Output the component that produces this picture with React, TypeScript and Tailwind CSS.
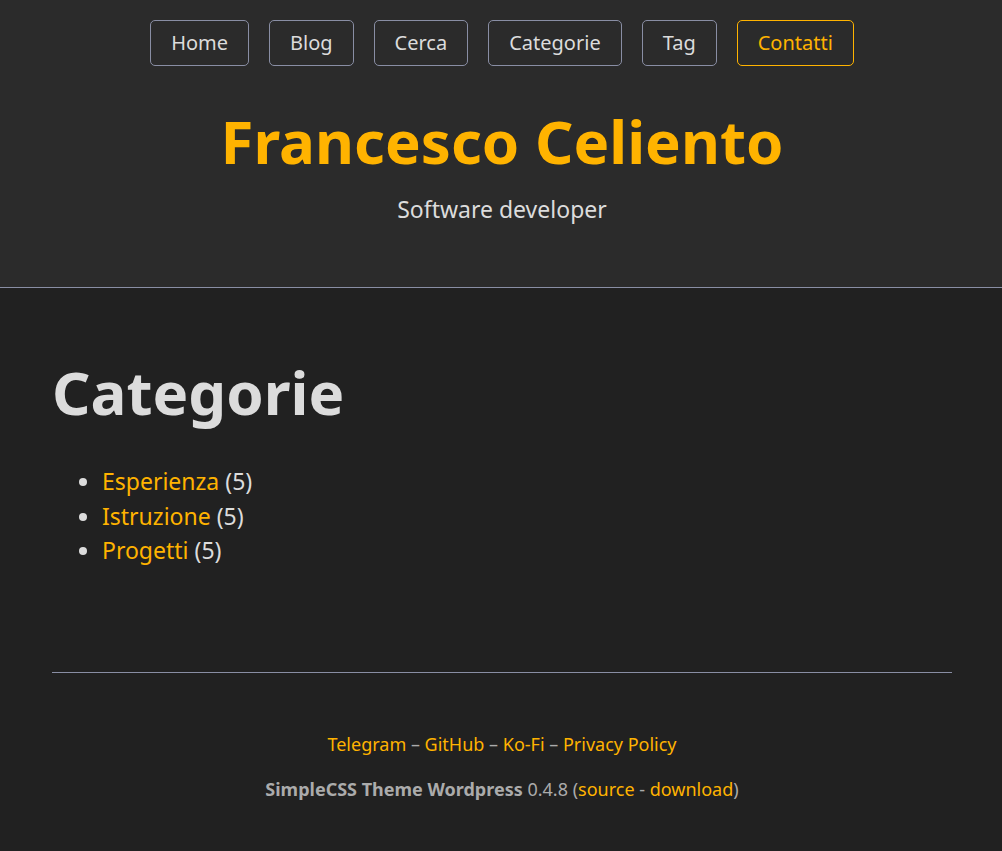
import React from "react";

const navItems = ["Home", "Blog", "Cerca", "Categorie", "Tag"];

export default function App() {
  return (
    <div className="min-h-[851px] bg-[#212121] text-[#dcdcdc]" style={{ fontFamily: '"Noto Sans", sans-serif' }}>
      <header className="bg-[#2b2b2b] border-b border-[#898ea4] pt-[20px] pb-[60px] pl-[2px] h-[288px] flex flex-col items-center">
        <nav className="flex justify-center gap-[20px]">
          {navItems.map((n) => (
            <a key={n} href="#" className="h-[46px] px-[20px] flex items-center border border-[#898ea4] rounded-[5px] text-[20px] text-[#dcdcdc]">
              {n}
            </a>
          ))}
          <a href="#" className="h-[46px] px-[20px] flex items-center border border-[#ffb300] rounded-[5px] text-[20px] text-[#ffb300]">
            Contatti
          </a>
        </nav>
        <h1 className="mt-[39px] text-[60px] leading-[72px] font-bold text-[#ffb300]">Francesco Celiento</h1>
        <p className="mt-[15px] text-[23px] leading-[34.5px]">Software developer</p>
      </header>
      <div className="w-[900px] ml-[52px]">
        <main className="pt-[68px] pb-[104px]">
          <h1 className="text-[60px] leading-[72px] font-bold">Categorie</h1>
          <ul className="mt-[36px] list-disc pl-[50px] text-[23px] leading-[34.5px]">
            <li><a href="#" className="text-[#ffb300]">Esperienza</a> (5)</li>
            <li><a href="#" className="text-[#ffb300]">Istruzione</a> (5)</li>
            <li><a href="#" className="text-[#ffb300]">Progetti</a> (5)</li>
          </ul>
        </main>
        <footer className="border-t border-[#898ea4] pt-[58px] pb-[50px] text-center text-[18px] leading-[27px] text-[#ababab]">
          <p>
            <a href="#" className="text-[#ffb300]">Telegram</a> – <a href="#" className="text-[#ffb300]">GitHub</a> – <a href="#" className="text-[#ffb300]">Ko-Fi</a> – <a href="#" className="text-[#ffb300]">Privacy Policy</a>
          </p>
          <p className="mt-[18px]">
            <b>SimpleCSS Theme Wordpress</b> 0.4.8 (<a href="#" className="text-[#ffb300]">source</a> - <a href="#" className="text-[#ffb300]">download</a>)
          </p>
        </footer>
      </div>
    </div>
  );
}
